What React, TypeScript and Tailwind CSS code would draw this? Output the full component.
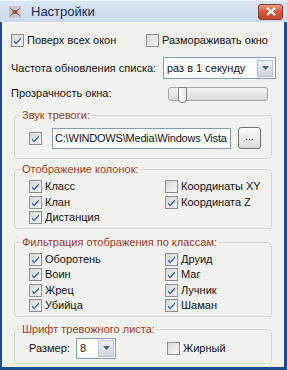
import React from "react";

const Check = ({ checked }: { checked: boolean }) => (
  <svg width="13" height="13" viewBox="0 0 13 13" className="shrink-0">
    <defs>
      <linearGradient id="cbg" x1="0" y1="0" x2="1" y2="1">
        <stop offset="0" stopColor="#d4d4cf" />
        <stop offset="1" stopColor="#fbfbf9" />
      </linearGradient>
    </defs>
    <rect x="0.5" y="0.5" width="12" height="12" fill="url(#cbg)" stroke="#8a8d94" />
    {checked && (
      <path d="M3 6.2 L5.2 8.6 L10 3.2 L10 5.2 L5.2 10.6 L3 8.2 Z" fill="#3a66b8" />
    )}
  </svg>
);

const CheckRow = ({ checked, label }: { checked: boolean; label: string }) => (
  <div className="flex items-center gap-[3px] h-[15.5px]">
    <Check checked={checked} />
    <span className="text-[#111] leading-none whitespace-nowrap">{label}</span>
  </div>
);

const DropBtn = () => (
  <div className="w-[16px] h-[17px] border border-[#b9c1cd] bg-gradient-to-b from-[#eef1f6] to-[#cfd5df] flex items-center justify-center">
    <svg width="7" height="4" viewBox="0 0 7 4">
      <path d="M0 0 H7 L3.5 4 Z" fill="#4d6185" />
    </svg>
  </div>
);

const Group = ({
  title,
  className,
  children,
}: {
  title: string;
  className?: string;
  children: React.ReactNode;
}) => (
  <fieldset
    className={
      "border border-[#d6d6d0] rounded-[4px] mx-[12px] pl-[14px] pr-[8px] " +
      (className ?? "")
    }
  >
    <legend className="ml-[-8px] px-[1px] text-[#9b3b1f] leading-none">{title}</legend>
    {children}
  </fieldset>
);

export default function App() {
  return (
    <div
      className="w-[287px] h-[370px] bg-[#1d4c8c] flex flex-col pl-[2px] pr-[3px] pb-[3px] text-[11px]"
      style={{ fontFamily: '"Liberation Sans", Arial, sans-serif' }}
    >
      {/* title bar */}
      <div className="h-[22px] -ml-[2px] -mr-[3px] bg-gradient-to-b from-[#dbe5f2] to-[#cbd9ec] flex items-center pl-[8px] pr-[4px] border-t border-[#eef3fa]">
        <svg width="14" height="14" viewBox="0 0 14 14">
          <rect x="1" y="1" width="12" height="12" fill="#c8c8c8" />
          <path d="M1 2 L7 6 L13 2 L9 7 L13 12 L7 8 L1 12 L5 7 Z" fill="#7a7a7a" />
          <circle cx="7" cy="7" r="2" fill="#c0392b" />
        </svg>
        <span className="ml-[9px] text-[13px] text-[#0f2a66]">Настройки</span>
        <div className="ml-auto w-[25px] h-[16px] rounded-[3px] border border-[#8e3a2a] bg-gradient-to-b from-[#ec9a84] via-[#d4583c] to-[#c2492e] flex items-center justify-center">
          <svg width="10" height="9" viewBox="0 0 10 9">
            <path d="M1 1 L9 8 M9 1 L1 8" stroke="#fff" strokeWidth="2.2" />
          </svg>
        </div>
      </div>

      {/* body */}
      <div className="flex-1 bg-[#f1f1ee] border-t border-[#fafafa] flex flex-col">
        <div className="flex items-center mt-[10px] pl-[9px] h-[15px]">
          <div className="w-[135px]">
            <CheckRow checked label="Поверх всех окон" />
          </div>
          <CheckRow checked={false} label="Размораживать окно" />
        </div>

        <div className="flex items-center mt-[9px] pl-[9px] pr-[8px]">
          <span className="text-[#111] w-[152px]">Частота обновления списка:</span>
          <div className="flex-1 h-[22px] bg-white border border-[#7f9db9] flex items-center pl-[3px] pr-[2px]">
            <span className="flex-1 text-[#111]">раз в 1 секунду</span>
            <DropBtn />
          </div>
        </div>

        <div className="flex items-center mt-[6px] pl-[9px] pr-[16px] h-[17px]">
          <span className="text-[#111] w-[157px]">Прозрачность окна:</span>
          <div className="flex-1 relative h-[14px] rounded-[3px] border border-[#a7a7a3] bg-gradient-to-b from-[#f4f4f2] to-[#d9d9d6]">
            <div className="absolute left-[9px] -top-[1px] w-[9px] h-[16px] rounded-b-[4px] rounded-t-[1px] border border-[#7d7d7a] bg-gradient-to-r from-[#ffffff] to-[#e6e6e3]" />
          </div>
        </div>

        <Group title="Звук тревоги:" className="mt-[8px] pt-[6px] pb-[9px]">
          <div className="flex items-center">
            <Check checked />
            <div className="ml-[10px] w-[179px] h-[21px] bg-white border border-[#7f9db9] flex items-center pl-[2px] overflow-hidden">
              <span className="text-[#111] whitespace-nowrap tracking-[-0.2px]">C:\WINDOWS\Media\Windows Vista</span>
            </div>
            <div className="ml-[7px] w-[23px] h-[22px] rounded-[3px] border border-[#6f6f6f] bg-gradient-to-b from-[#fafafa] to-[#dcdcd8] flex items-center justify-center text-[#111] leading-none pb-[3px]">
              ...
            </div>
          </div>
        </Group>

        <Group title="Отображение колонок:" className="mt-[5px] pt-[4px] pb-[2px]">
          <div className="grid grid-cols-[136px_1fr]">
            <CheckRow checked label="Класс" />
            <CheckRow checked={false} label="Координаты XY" />
            <CheckRow checked label="Клан" />
            <CheckRow checked label="Координата Z" />
            <CheckRow checked label="Дистанция" />
          </div>
        </Group>

        <Group title="Фильтрация отображения по классам:" className="mt-[8px] pt-[4px] pb-[2px]">
          <div className="grid grid-cols-[136px_1fr]">
            <CheckRow checked label="Оборотень" />
            <CheckRow checked label="Друид" />
            <CheckRow checked label="Воин" />
            <CheckRow checked label="Маг" />
            <CheckRow checked label="Жрец" />
            <CheckRow checked label="Лучник" />
            <CheckRow checked label="Убийца" />
            <CheckRow checked label="Шаман" />
          </div>
        </Group>

        <Group title="Шрифт тревожного листа:" className="mt-[7px] pt-[3px] pb-[4px] pl-[13px]">
          <div className="flex items-center">
            <span className="text-[#111] w-[47px]">Размер:</span>
            <div className="w-[40px] h-[21px] bg-white border border-[#7f9db9] flex items-center pl-[3px] pr-[1px]">
              <span className="flex-1 text-[#111]">8</span>
              <DropBtn />
            </div>
            <div className="ml-[51px]">
              <CheckRow checked={false} label="Жирный" />
            </div>
          </div>
        </Group>
      </div>
    </div>
  );
}
